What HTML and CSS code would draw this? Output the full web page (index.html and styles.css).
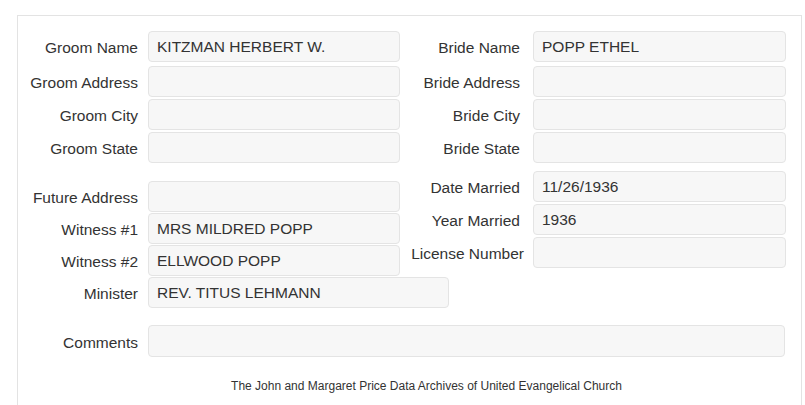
FILE: index.html
```html
<!DOCTYPE html>
<html>
<head>
<meta charset="utf-8">
<link rel="stylesheet" href="styles.css">
</head>
<body>
<div class="panel">
  <div class="section top">
    <div class="col left">
      <div class="row first"><label class="lbl">Groom Name</label><div class="field">KITZMAN HERBERT W.</div></div>
      <div class="row"><label class="lbl">Groom Address</label><div class="field"></div></div>
      <div class="row"><label class="lbl">Groom City</label><div class="field"></div></div>
      <div class="row"><label class="lbl">Groom State</label><div class="field"></div></div>
    </div>
    <div class="col right">
      <div class="row first"><label class="lbl">Bride Name</label><div class="field">POPP ETHEL</div></div>
      <div class="row"><label class="lbl">Bride Address</label><div class="field"></div></div>
      <div class="row"><label class="lbl">Bride City</label><div class="field"></div></div>
      <div class="row"><label class="lbl">Bride State</label><div class="field"></div></div>
    </div>
  </div>
  <div class="section mid">
    <div class="col left lower">
      <div class="row"><label class="lbl">Future Address</label><div class="field"></div></div>
      <div class="row"><label class="lbl">Witness #1</label><div class="field">MRS MILDRED POPP</div></div>
      <div class="row"><label class="lbl">Witness #2</label><div class="field">ELLWOOD POPP</div></div>
      <div class="row"><label class="lbl">Minister</label><div class="field wide">REV. TITUS LEHMANN</div></div>
    </div>
    <div class="col right lower-r">
      <div class="row"><label class="lbl">Date Married</label><div class="field">11/26/1936</div></div>
      <div class="row"><label class="lbl">Year Married</label><div class="field">1936</div></div>
      <div class="row"><label class="lbl lic">License Number</label><div class="field"></div></div>
    </div>
  </div>
  <div class="row comments"><label class="lbl">Comments</label><div class="field full"></div></div>
  <p class="footer">The John and Margaret Price Data Archives of United Evangelical Church</p>
</div>
</body>
</html>
```
FILE: styles.css
```css
html, body {
  margin: 0;
  padding: 0;
  background: #fff;
  overflow: hidden;
}
body {
  font-family: "Liberation Sans", Arial, sans-serif;
  color: #333;
}
.panel {
  margin: 15px 3px 0 17px;
  border: 1px solid #e3e3e3;
  border-bottom: none;
  padding-top: 15px;
  height: 390px;
  box-sizing: border-box;
}
.section {
  display: flex;
}
.col {
  display: flex;
  flex-direction: column;
  gap: 2px;
  flex-shrink: 0;
}
.col.left {
  width: 392px;
}
.col.right {
  width: 390px;
}
.row {
  display: flex;
  align-items: center;
  height: 31px;
}
.row.first {
  margin-bottom: 2px;
}
.lbl {
  display: flex;
  justify-content: flex-end;
  flex-shrink: 0;
  white-space: nowrap;
  font-size: 15.5px;
  line-height: 18px;
  padding-top: 3px;
}
.left .lbl,
.comments .lbl {
  width: 120px;
  margin-right: 10px;
}
.right .lbl {
  width: 110px;
  margin-right: 13px;
}
.right .lbl.lic {
  width: 114px;
  margin-right: 9px;
}
.field {
  box-sizing: border-box;
  flex-shrink: 0;
  height: 31px;
  background: #f7f7f7;
  border: 1px solid #e4e4e4;
  border-radius: 4px;
  font-size: 15.5px;
  line-height: 29px;
  padding: 0 8px;
  white-space: nowrap;
  color: #333;
}
.left .field {
  width: 252px;
}
.right .field {
  width: 253px;
}
.left .field.wide {
  width: 301px;
}
.col.lower {
  margin-top: 18px;
  gap: 1px;
}
.col.lower-r {
  margin-top: 8px;
}
.comments {
  margin-top: 17px;
  height: 32px;
}
.field.full {
  width: 637px;
  height: 32px;
}
.footer {
  margin: 21px 0 0 0;
  padding-left: 34px;
  text-align: center;
  font-size: 12px;
  line-height: 16px;
  color: #333;
}
```
